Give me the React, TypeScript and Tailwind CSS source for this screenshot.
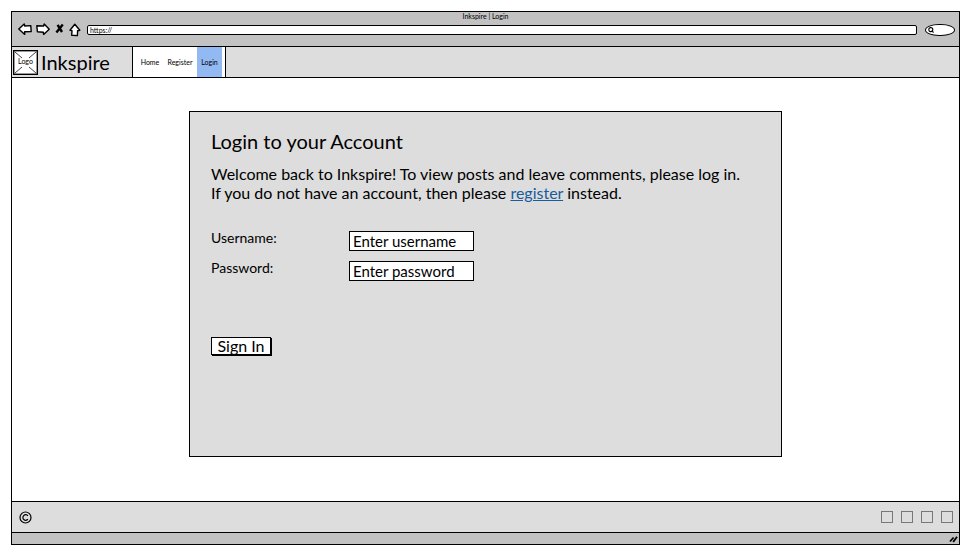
import type { ReactNode } from "react";

const line = {
  fill: "white",
  stroke: "black",
  strokeWidth: 1.4,
  strokeLinejoin: "round" as const,
  strokeLinecap: "round" as const,
};

function ToolButton({ label, children }: { label: string; children: ReactNode }) {
  return (
    <button type="button" aria-label={label} className="shrink-0">
      {children}
    </button>
  );
}

function BrowserBar() {
  return (
    <header className="h-[35px] shrink-0 border-b border-black bg-[#c2c2c2]">
      <div className="h-2.5 text-center text-[7px] leading-[9px]">Inkspire | Login</div>
      <div className="flex h-4 items-center pr-1 pl-1.5">
        <div className="flex w-[69px] shrink-0 items-center gap-1">
          <ToolButton label="Back">
            <svg width="14" height="14" viewBox="0 0 14 14" {...line}>
              <path d="M.8 6 6.2 1 6.8 3 12.8 2.6 13.2 8.6 6.6 8.7 6.7 11.4Z" />
            </svg>
          </ToolButton>
          <ToolButton label="Forward">
            <svg width="14" height="14" viewBox="0 0 14 14" {...line}>
              <path d="M13.2 6.2 8.2 1 7.6 3 .8 2.8 1.4 8.8 7.4 9.2 7.6 11.4Z" />
            </svg>
          </ToolButton>
          <ToolButton label="Stop">
            <svg width="11" height="14" viewBox="0 0 11 14" fill="none" stroke="black" strokeWidth="2.4">
              <path d="M3.6 1.8 8 9M8.8 1.6 2.4 9.4" />
            </svg>
          </ToolButton>
          <ToolButton label="Home page">
            <svg width="12" height="14" viewBox="0 0 12 14" {...line}>
              <path d="M5.8 1.2 1 7.2 3 7.6 2.7 12.2 8.4 12.6 8.6 7.8 10.8 7.2Z" />
            </svg>
          </ToolButton>
        </div>
        <input
          aria-label="Address"
          defaultValue="https://"
          className="h-2.5 min-w-0 flex-1 rounded-[2px] border border-black bg-white px-0.5 text-[7px] leading-[8px] outline-none"
        />
        <label className="ml-2 flex h-3 w-[30px] items-center rounded-[14px/6px] border border-black bg-white pl-0.5">
          <svg width="7" height="8" viewBox="0 0 7 8" fill="none" stroke="black" strokeWidth="1.1">
            <circle cx="2.8" cy="3.6" r="2" />
            <path d="M4.4 4.8 5.4 6.8" />
          </svg>
          <input aria-label="Search" className="w-4 min-w-0 bg-transparent text-[7px] outline-none" />
        </label>
      </div>
    </header>
  );
}

function SiteNav() {
  return (
    <div className="flex h-[31px] shrink-0 border-b border-black bg-[#dddddd]">
      <div className="flex w-[120px] items-center gap-[3px] pl-px">
        <svg width="25" height="25" viewBox="0 0 25 25" role="img" aria-label="Logo">
          <rect x=".7" y=".7" width="23.6" height="23.6" fill="white" stroke="black" strokeWidth="1.4" />
          <path d="M2 2l7 6M23 2l-7 6M2 23l7-6M23 23l-7-6" stroke="#444" strokeWidth="1" />
          <text x="12.5" y="14" textAnchor="middle" fontSize="7">
            Logo
          </text>
        </svg>
        <span className="text-[20px] leading-6">Inkspire</span>
      </div>
      <nav className="flex border-x border-black bg-white pr-[3px] pl-1 text-[7px] leading-[30px]">
        <a href="#home" className="w-[26px] text-center">Home</a>
        <a href="#register" className="w-[34px] text-center">Register</a>
        <a href="#login" aria-current="page" className="w-[25px] bg-[#93b9f2] text-center">Login</a>
      </nav>
    </div>
  );
}

const labelClass = "text-[14px] leading-[14px]";
const fieldClass =
  "h-5 w-[125px] border border-black bg-white px-[3px] text-[15px] leading-[18px] text-black placeholder:text-black outline-none";

function LoginCard() {
  return (
    <section className="min-h-[346px] w-full max-w-[593px] border border-black bg-[#dddddd] px-[21px] pt-[17px]">
      <h1 className="text-[20px] leading-6">Login to your Account</h1>
      <p className="mt-[11px] text-[16px] leading-[19px]">
        Welcome back to Inkspire! To view posts and leave comments, please log in.
        <br />
        If you do not have an account, then please{" "}
        <a href="#register" className="text-[#195b9c] underline">register</a> instead.
      </p>
      <form className="mt-[29px]" onSubmit={(event) => event.preventDefault()}>
        <div className="grid grid-cols-[138px_auto] justify-start gap-y-2.5">
          <label htmlFor="username" className={labelClass}>Username:</label>
          <input id="username" placeholder="Enter username" className={fieldClass} />
          <label htmlFor="password" className={labelClass}>Password:</label>
          <input id="password" type="password" placeholder="Enter password" className={fieldClass} />
        </div>
        <button
          type="submit"
          className="mt-14 h-[18px] w-[60px] border border-black bg-white text-[16px] leading-4 shadow-[1px_1px_0_black]"
        >
          Sign In
        </button>
      </form>
    </section>
  );
}

function SiteFooter() {
  return (
    <footer className="flex h-8 shrink-0 items-center justify-between border-y border-black bg-[#dddddd] pr-1.5 pl-[7px]">
      <svg width="13" height="13" viewBox="0 0 13 13" fill="none" stroke="black" strokeWidth="1.2" role="img" aria-label="Copyright">
        <circle cx="6.5" cy="6.5" r="5.5" />
        <path d="M8.9 4.8A2.8 2.8 0 1 0 8.9 8.2" />
      </svg>
      <div className="flex gap-2">
        {["one", "two", "three", "four"].map((name) => (
          <a key={name} href="#social" aria-label={`Social link ${name}`} className="size-3 border border-[#777777]" />
        ))}
      </div>
    </footer>
  );
}

export default function App() {
  return (
    <div className="flex min-h-screen flex-col bg-white pt-[11px] pr-3 pb-[11px] pl-[11px] font-['Lato','Open_Sans',sans-serif] text-black">
      <div className="flex flex-1 flex-col border border-black">
        <BrowserBar />
        <SiteNav />
        <main className="flex flex-1 items-start justify-center px-6 pt-[33px] pb-11">
          <LoginCard />
        </main>
        <SiteFooter />
        <div className="flex h-[11px] shrink-0 items-center justify-end bg-[#c2c2c2] pr-px">
          <svg width="9" height="8" viewBox="0 0 9 8" stroke="black" strokeWidth="1.8">
            <path d="M1 6.5 4.6 2.5M4.2 7 8 1.8" />
          </svg>
        </div>
      </div>
    </div>
  );
}
